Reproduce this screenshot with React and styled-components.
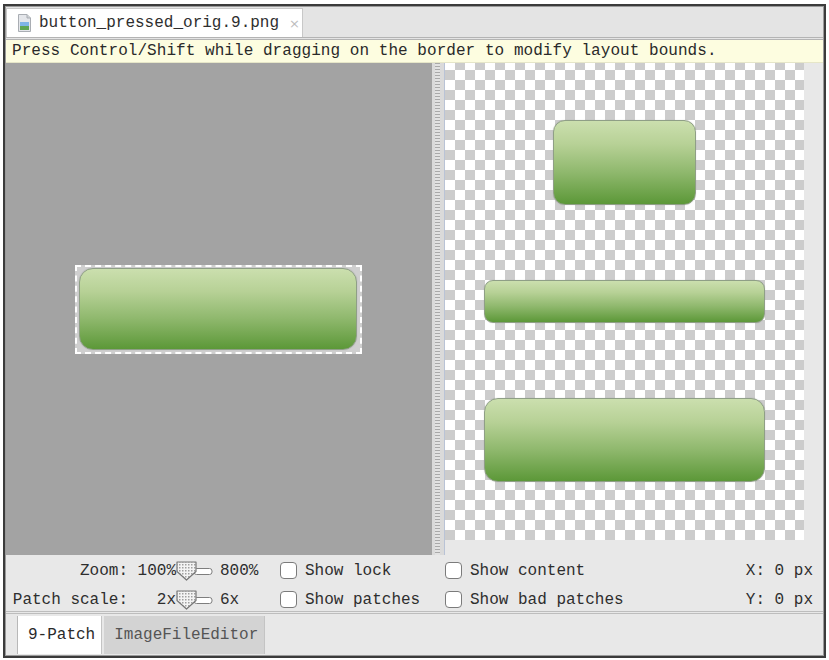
import styled, { createGlobalStyle } from "styled-components";

const GlobalStyle = createGlobalStyle`
    html, body {
        margin: 0;
        padding: 0;
        background: #ffffff;
    }
    body {
        font-family: "Liberation Mono", "DejaVu Sans Mono", monospace;
        font-size: 16px;
        color: #2a2a2a;
    }
`;

const FileIcon = () => (
    <svg width="13" height="18" viewBox="0 0 13 18">
        <path d="M0.5 0.5 H9 L12.5 4 V17.5 H0.5 Z" fill="#e4e6ea" stroke="#a9adb3" />
        <path d="M9 0.5 V4 H12.5" fill="#cfd2d6" stroke="#a9adb3" />
        <rect x="2" y="8" width="9" height="4" fill="#7fb4e6" />
        <rect x="2" y="12" width="9" height="4" fill="#5fa553" />
    </svg>
);

const SliderThumb = () => (
    <svg width="38" height="20" viewBox="0 0 38 20">
        <defs>
            <pattern id="hatch" width="3" height="3" patternUnits="userSpaceOnUse">
                <rect width="3" height="3" fill="#f4f4f4" />
                <rect width="1.5" height="1.5" fill="#a0a0a0" />
            </pattern>
        </defs>
        <rect x="18" y="7.5" width="18" height="6" rx="2.5" fill="#ffffff" stroke="#7e7e7e" />
        <path d="M1 1 H20 V10.5 L10.5 19 L1 10.5 Z" fill="url(#hatch)" stroke="#777777" strokeWidth="1.2" strokeLinejoin="round" />
    </svg>
);

const App = () => {
    return (
        <S.Page>
            <GlobalStyle />
            <S.Frame>
                <S.TabBar>
                    <S.FileTab>
                        <FileIcon />
                        <span>button_pressed_orig.9.png</span>
                        <S.Close>×</S.Close>
                    </S.FileTab>
                </S.TabBar>
                <S.Hint>Press Control/Shift while dragging on the border to modify layout bounds.</S.Hint>

                <S.Main>
                    <S.EditPane>
                        <S.Bounds>
                            <S.Patch $w={278} $h={82} $r={14} />
                        </S.Bounds>
                    </S.EditPane>
                    <S.Splitter>
                        <S.Grip />
                    </S.Splitter>
                    <S.PreviewPane>
                        <S.Checker>
                            <S.Patch $w={143} $h={85} $r={12} />
                            <S.Patch $w={281} $h={43} $r={9} />
                            <S.Patch $w={281} $h={84} $r={14} />
                        </S.Checker>
                    </S.PreviewPane>
                </S.Main>

                <S.Controls>
                    <S.Label>Zoom:</S.Label>
                    <S.Value>100%</S.Value>
                    <S.Slider><SliderThumb /></S.Slider>
                    <S.Max>800%</S.Max>
                    <S.Check><S.Box />Show lock</S.Check>
                    <S.Check><S.Box />Show content</S.Check>
                    <S.Coord>X: 0 px</S.Coord>

                    <S.Label>Patch scale:</S.Label>
                    <S.Value>2x</S.Value>
                    <S.Slider><SliderThumb /></S.Slider>
                    <S.Max>6x</S.Max>
                    <S.Check><S.Box />Show patches</S.Check>
                    <S.Check><S.Box />Show bad patches</S.Check>
                    <S.Coord>Y: 0 px</S.Coord>
                </S.Controls>

                <S.BottomTabs>
                    <S.EditorTab $active>9-Patch</S.EditorTab>
                    <S.EditorTab>ImageFileEditor</S.EditorTab>
                </S.BottomTabs>
            </S.Frame>
        </S.Page>
    );
};

const Page = styled.div`
    width: 829px;
    height: 660px;
    padding: 4px 3px 2px 3px;
    box-sizing: border-box;
`;
const Frame = styled.div`
    width: 100%;
    height: 100%;
    box-sizing: border-box;
    border: 2px solid #3b3b3b;
    outline: 1px solid #9a9a9a;
    outline-offset: -3px;
    display: flex;
    flex-direction: column;
    background: #e8e8e8;
    overflow: hidden;
`;
const TabBar = styled.div`
    height: 34px;
    box-sizing: border-box;
    background: #e4e4e4;
    padding: 2px 0 0 1px;
    border-bottom: 3px double #b4b4b4;
    display: flex;
    align-items: flex-end;
`;
const FileTab = styled.div`
    height: 29px;
    width: 297px;
    box-sizing: border-box;
    background: #ffffff;
    border: 1px solid #c8c8c8;
    border-bottom: none;
    display: flex;
    align-items: center;
    padding-left: 11px;
    gap: 8px;
    color: #2e2e2e;
`;
const Close = styled.span`
    color: #bdbdbd;
    font-family: "DejaVu Sans", sans-serif;
    font-size: 13px;
    margin-left: 2px;
`;
const Hint = styled.div`
    height: 23px;
    box-sizing: border-box;
    background: #fdfde0;
    border-bottom: 1px solid #e6e6c8;
    padding-left: 7px;
    line-height: 22px;
    letter-spacing: 0.05px;
    white-space: nowrap;
    color: #2a2a2a;
`;
const Main = styled.div`
    height: 492px;
    display: flex;
`;
const EditPane = styled.div`
    width: 427px;
    background: #a3a3a3;
    display: flex;
    align-items: center;
    justify-content: center;
`;
const Bounds = styled.div`
    padding: 1px 3px 2px 2px;
    border: 2px dashed #ffffff;
    background: #cfcfcf;
    display: flex;
`;
const Splitter = styled.div`
    width: 13px;
    background: #dadada;
    border-right: 1px solid #b9c3d6;
    box-sizing: border-box;
    display: flex;
    justify-content: center;
`;
const Grip = styled.div`
    width: 5px;
    margin-right: 1px;
    background: repeating-linear-gradient(
        180deg,
        #a9a9a9 0 1px,
        #e2e2e2 1px 3px
    );
`;
const PreviewPane = styled.div`
    flex: 1;
    background: #e8e8e8;
`;
const Checker = styled.div`
    width: 359px;
    height: 477px;
    box-sizing: border-box;
    padding-top: 57px;
    background: repeating-conic-gradient(#cccccc 0 25%, #ffffff 0 50%) 0 -3px / 20px 20px;
    display: flex;
    flex-direction: column;
    align-items: center;
    gap: 75px;
`;
const Patch = styled.div`
    width: ${(p) => p.$w}px;
    height: ${(p) => p.$h}px;
    border-radius: ${(p) => p.$r}px;
    box-sizing: border-box;
    border: 1px solid #8f9f86;
    background: linear-gradient(180deg, #cbdfae 0%, #b7d196 28%, #8fb86d 62%, #5c9838 100%);
    box-shadow: 0 0 1px rgba(0, 0, 0, 0.25);
`;
const Controls = styled.div`
    height: 59px;
    box-sizing: border-box;
    padding: 1px 11px 0 6px;
    display: grid;
    grid-template-columns: 117px 48px 38px 66px 165px 1fr auto;
    grid-auto-rows: 29px;
    align-items: center;
    white-space: nowrap;
    border-bottom: 3px double #bdbdbd;
    color: #2e2e2e;
`;
const Label = styled.div`
    text-align: right;
`;
const Value = styled.div`
    text-align: right;
`;
const Slider = styled.div`
    display: flex;
    align-items: center;
    height: 20px;
`;
const Max = styled.div`
    padding-left: 6px;
`;
const Check = styled.div`
    display: flex;
    align-items: center;
    gap: 8px;
`;
const Box = styled.span`
    width: 17px;
    height: 17px;
    box-sizing: border-box;
    border: 1.5px solid #7b7b7b;
    border-radius: 4px;
    background: #ffffff;
`;
const Coord = styled.div`
    text-align: right;
`;
const BottomTabs = styled.div`
    flex: 1;
    display: flex;
    align-items: stretch;
    padding: 2px 0 2px 12px;
`;
const EditorTab = styled.div`
    display: flex;
    align-items: center;
    padding: 0 6px 0 10px;
    margin-right: 2px;
    background: ${(p) => (p.$active ? "#ffffff" : "#d3d3d3")};
    border-left: ${(p) => (p.$active ? "1px solid #b8b8b8" : "none")};
    border-right: 1px solid #c4c4c4;
    color: ${(p) => (p.$active ? "#2a2a2a" : "#555555")};
`;

const S = {
    Page,
    Frame,
    TabBar,
    FileTab,
    Close,
    Hint,
    Main,
    EditPane,
    Bounds,
    Splitter,
    Grip,
    PreviewPane,
    Checker,
    Patch,
    Controls,
    Label,
    Value,
    Slider,
    Max,
    Check,
    Box,
    Coord,
    BottomTabs,
    EditorTab,
};
export default App;
